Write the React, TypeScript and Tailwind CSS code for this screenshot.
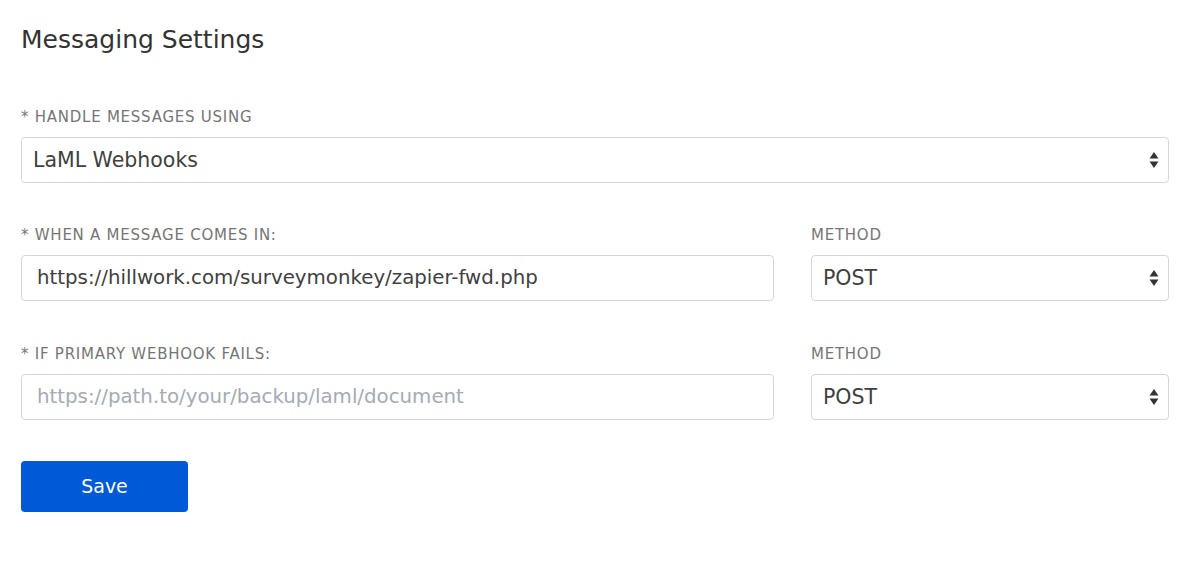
import React from "react";

function Arrows() {
  return (
    <svg
      width="10"
      height="18"
      viewBox="0 0 10 18"
      className="pointer-events-none absolute right-[9px] top-1/2 -translate-y-1/2"
    >
      <path d="M5 1 L9.5 7.5 H0.5 Z" fill="#333" />
      <path d="M5 17 L9.5 10.5 H0.5 Z" fill="#333" />
    </svg>
  );
}

function Label({ children }: { children: React.ReactNode }) {
  return (
    <p className="mb-[12px] text-[15px] leading-[16px] tracking-[0.05em] text-[#757575]">
      {children}
    </p>
  );
}

function SelectBox({ value }: { value: string }) {
  return (
    <div className="relative flex h-[46px] items-center rounded-[4px] border border-[#d3d7dc] bg-white pl-[11px]">
      <span className="text-[20.5px] text-[#3f3f3f]">{value}</span>
      <Arrows />
    </div>
  );
}

export default function App() {
  return (
    <div
      className="min-h-[576px] w-[1200px] bg-white px-[21px] pt-[25px]"
      style={{ fontFamily: '"DejaVu Sans", sans-serif' }}
    >
      <h1 className="text-[25px] leading-[30px] text-[#333]">Messaging Settings</h1>

      <div className="mt-[54px]">
        <Label>* HANDLE MESSAGES USING</Label>
        <div className="w-[1148px]">
          <SelectBox value="LaML Webhooks" />
        </div>
      </div>

      <div className="mt-[44px] flex gap-[37px]">
        <div className="w-[753px]">
          <Label>* WHEN A MESSAGE COMES IN:</Label>
          <div className="flex h-[46px] items-center rounded-[4px] border border-[#d3d7dc] bg-white pl-[15px]">
            <span className="text-[19.8px] text-[#3f3f3f]">
              https://hillwork.com/surveymonkey/zapier-fwd.php
            </span>
          </div>
        </div>
        <div className="w-[358px]">
          <Label>METHOD</Label>
          <SelectBox value="POST" />
        </div>
      </div>

      <div className="mt-[45px] flex gap-[37px]">
        <div className="w-[753px]">
          <Label>* IF PRIMARY WEBHOOK FAILS:</Label>
          <div className="flex h-[46px] items-center rounded-[4px] border border-[#d3d7dc] bg-white pl-[15px]">
            <span className="text-[19.8px] text-[#a4abb3]">
              https://path.to/your/backup/laml/document
            </span>
          </div>
        </div>
        <div className="w-[358px]">
          <Label>METHOD</Label>
          <SelectBox value="POST" />
        </div>
      </div>

      <button className="mt-[41px] flex h-[51px] w-[167px] items-center justify-center rounded-[4px] bg-[#0059d6] text-[19px] text-white">
        Save
      </button>
    </div>
  );
}
